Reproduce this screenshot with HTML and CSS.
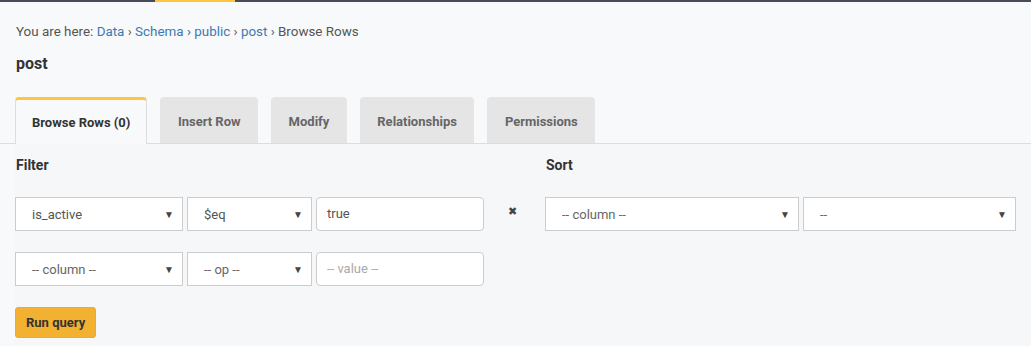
FILE: index.html
```html
<!DOCTYPE html>
<html lang="en">
<head>
    <meta charset="UTF-8">
    <title>Browse Rows - post</title>
    <link rel="stylesheet" href="styles.css">
</head>
<body>
    <div class="topbar"><span class="topbar-active"></span></div>

    <div class="header">
        <div class="breadcrumb">
            You are here: <a href="#">Data</a> <span class="sep">&rsaquo;</span>
            <a href="#">Schema</a> <span class="sep">&rsaquo;</span>
            <a href="#">public</a> <span class="sep">&rsaquo;</span>
            <a href="#">post</a> <span class="sep">&rsaquo;</span> Browse Rows
        </div>
        <h2 class="table-name">post</h2>
    </div>

    <div class="tabs">
        <div class="tab active">Browse Rows (0)</div>
        <div class="tab">Insert Row</div>
        <div class="tab">Modify</div>
        <div class="tab">Relationships</div>
        <div class="tab">Permissions</div>
    </div>

    <div class="query">
        <div class="query-cols">
            <div class="filter-col">
                <h4 class="section-title">Filter</h4>
                <div class="query-row">
                    <div class="select col-select"><span>is_active</span><span class="arrow">&#9660;</span></div>
                    <div class="select op-select"><span>$eq</span><span class="arrow">&#9660;</span></div>
                    <div class="text-input">true</div>
                    <span class="remove">&#10006;</span>
                </div>
                <div class="query-row">
                    <div class="select col-select placeholder"><span>-- column --</span><span class="arrow">&#9660;</span></div>
                    <div class="select op-select placeholder"><span>-- op --</span><span class="arrow">&#9660;</span></div>
                    <div class="text-input empty">-- value --</div>
                </div>
            </div>
            <div class="sort-col">
                <h4 class="section-title">Sort</h4>
                <div class="query-row">
                    <div class="select sort-select placeholder"><span>-- column --</span><span class="arrow">&#9660;</span></div>
                    <div class="select dir-select placeholder"><span>--</span><span class="arrow">&#9660;</span></div>
                </div>
            </div>
        </div>
        <button class="run-btn">Run query</button>
    </div>
</body>
</html>
```

FILE: styles.css
```css
body {
    margin: 0;
    font-family: Roboto, "Liberation Sans", sans-serif;
    font-size: 13px;
    color: #333;
    background-color: #f8f9fa;
}
.topbar {
    height: 2px;
    background-color: #484c5a;
    padding-left: 155px;
}
.topbar-active {
    display: block;
    width: 80px;
    height: 2px;
    background-color: #fec53d;
}
.header {
    padding: 21px 16px 0;
}
.breadcrumb {
    font-size: 13.4px;
    color: #555;
    line-height: 18px;
}
.breadcrumb a {
    color: #3c7ab0;
    text-decoration: none;
}
.sep {
    color: #555;
}
.table-name {
    margin: 13px 0 0;
    font-size: 16px;
    font-weight: bold;
    line-height: 20px;
    color: #333;
}
.tabs {
    display: flex;
    gap: 13px;
    margin-top: 23px;
    padding-left: 15px;
    border-bottom: 1px solid #ddd;
}
.tab {
    height: 46px;
    line-height: 49px;
    padding: 0 17.5px;
    font-weight: bold;
    color: #666;
    background-color: #e5e5e5;
    border-radius: 4px 4px 0 0;
}
.tab.active {
    height: 43px;
    color: #333;
    background-color: #f8f9fa;
    border-top: 3px solid #fec53d;
    border-left: 1px solid #ddd;
    border-right: 1px solid #ddd;
    margin-bottom: -1px;
    line-height: 45px;
    padding: 0 16px 1px;
}
.query {
    margin-left: 15px;
    padding-top: 11px;
    padding-bottom: 9px;
    background-color: #f6f7f8;
}
.query-cols {
    display: flex;
    gap: 15px;
}
.filter-col {
    width: 515px;
}
.section-title {
    margin: 0 0 22px 1px;
    font-size: 14px;
    font-weight: bold;
    line-height: 20px;
    color: #333;
}
.query-row {
    display: flex;
    align-items: center;
    gap: 4px;
    margin-bottom: 21px;
}
.select {
    display: flex;
    justify-content: space-between;
    align-items: center;
    box-sizing: border-box;
    height: 34px;
    padding: 0 8px 0 16px;
    background-color: #fff;
    border: 1px solid #ccc;
    color: #555;
}
.select.placeholder {
    color: #666;
}
.arrow {
    font-size: 10px;
    color: #444;
}
.col-select { width: 168px; }
.op-select { width: 125px; }
.sort-select { width: 254px; }
.dir-select { width: 213px; }
.text-input {
    box-sizing: border-box;
    width: 168px;
    height: 34px;
    line-height: 32px;
    padding: 0 10px;
    background-color: #fff;
    border: 1px solid #ccc;
    border-radius: 4px;
    color: #555;
}
.text-input.empty {
    color: #aaa;
}
.remove {
    margin-left: 20px;
    margin-top: -6px;
    font-size: 11px;
    color: #444;
}
.run-btn {
    display: block;
    height: 31px;
    padding: 0 10px;
    font-family: inherit;
    font-size: 13px;
    font-weight: bold;
    color: #333;
    background-color: #f2b130;
    border: 1px solid #e9ac2f;
    border-radius: 3px;
}
```
